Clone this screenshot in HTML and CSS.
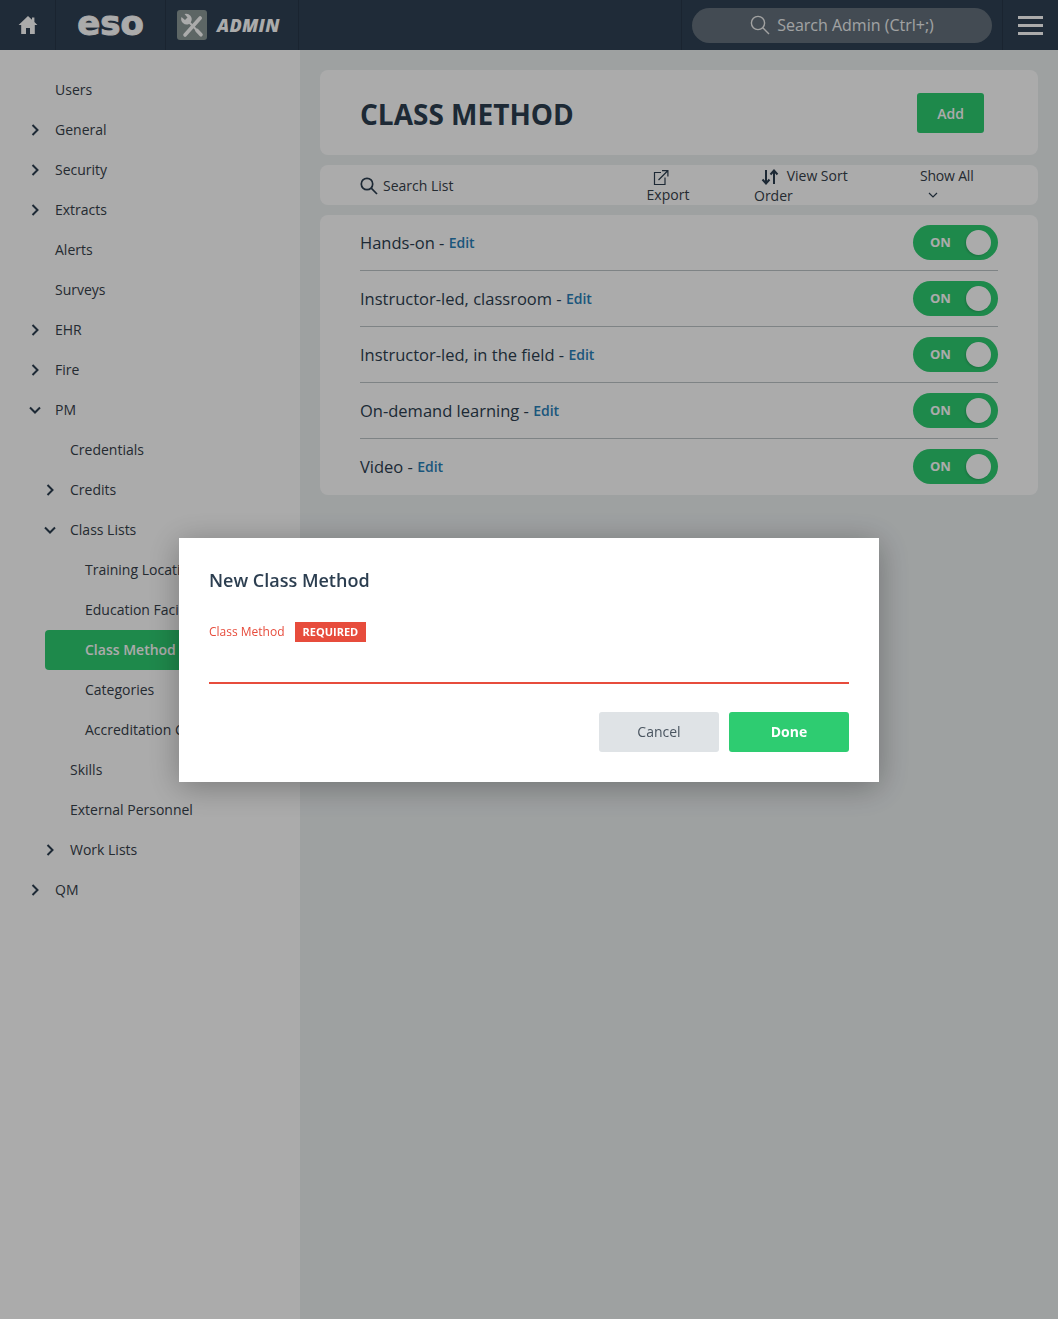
FILE: index.html
```html
<!DOCTYPE html>
<html lang="en">
<head>
<meta charset="utf-8">
<title>Class Method</title>
<link rel="stylesheet" href="styles.css">
</head>
<body>
<header class="topbar">
  <a class="home cell"><svg width="20" height="20" viewBox="0 0 20 20"><path class="fill-light" d="M10 1 L0.6 10 L3.2 10 L3.2 19 L8 19 L8 13 L12 13 L12 19 L16.8 19 L16.8 10 L19.4 10 L16.4 7.1 L16.4 2.5 L14 2.5 L14 4.8 Z"/></svg></a>
  <a class="logo cell">eso</a>
  <div class="app cell">
    <span class="app-icon"><svg width="30" height="30" viewBox="0 0 30 30"><path class="tool-thin" d="M11 11 L20 20.5"/><path class="tool-thin tool-grip" d="M20 20.5 L24 24.8"/><path class="tool-thick" d="M23.2 8 L8 25"/><path class="fill-light" d="M4.5 7 L8 10 L10.5 7.5 L7.5 4 A5.6 5.6 0 0 1 14 12 L12 14 A5.6 5.6 0 0 1 4.5 7 Z"/></svg></span>
    <span class="app-name">ADMIN</span>
  </div>
  <div class="spacer"></div>
  <div class="search cell">
    <div class="pill">
      <svg width="20" height="20" viewBox="0 0 20 20"><circle class="line" cx="8" cy="8" r="6.6"/><path class="line" d="M12.8 12.8 L19 19"/></svg>
      <span>Search Admin (Ctrl+;)</span>
    </div>
  </div>
  <a class="burger"><i></i><i></i><i></i></a>
</header>

<div class="layout">
  <nav class="sidebar">
    <a class="nav l0"><span class="chev"></span>Users</a>
    <a class="nav l0"><span class="chev"><svg width="8" height="12" viewBox="0 0 8 12"><path d="M1.5 1 L6.5 6 L1.5 11"/></svg></span>General</a>
    <a class="nav l0"><span class="chev"><svg width="8" height="12" viewBox="0 0 8 12"><path d="M1.5 1 L6.5 6 L1.5 11"/></svg></span>Security</a>
    <a class="nav l0"><span class="chev"><svg width="8" height="12" viewBox="0 0 8 12"><path d="M1.5 1 L6.5 6 L1.5 11"/></svg></span>Extracts</a>
    <a class="nav l0"><span class="chev"></span>Alerts</a>
    <a class="nav l0"><span class="chev"></span>Surveys</a>
    <a class="nav l0"><span class="chev"><svg width="8" height="12" viewBox="0 0 8 12"><path d="M1.5 1 L6.5 6 L1.5 11"/></svg></span>EHR</a>
    <a class="nav l0"><span class="chev"><svg width="8" height="12" viewBox="0 0 8 12"><path d="M1.5 1 L6.5 6 L1.5 11"/></svg></span>Fire</a>
    <a class="nav l0"><span class="chev"><svg width="12" height="8" viewBox="0 0 12 8"><path d="M1 1.5 L6 6.5 L11 1.5"/></svg></span>PM</a>
    <a class="nav l1"><span class="chev"></span>Credentials</a>
    <a class="nav l1"><span class="chev"><svg width="8" height="12" viewBox="0 0 8 12"><path d="M1.5 1 L6.5 6 L1.5 11"/></svg></span>Credits</a>
    <a class="nav l1"><span class="chev"><svg width="12" height="8" viewBox="0 0 12 8"><path d="M1 1.5 L6 6.5 L11 1.5"/></svg></span>Class Lists</a>
    <a class="nav l2"><span class="chev"></span>Training Locations</a>
    <a class="nav l2"><span class="chev"></span>Education Facilities</a>
    <a class="nav l2 active"><span class="chev"></span>Class Method</a>
    <a class="nav l2"><span class="chev"></span>Categories</a>
    <a class="nav l2"><span class="chev"></span>Accreditation Codes</a>
    <a class="nav l1"><span class="chev"></span>Skills</a>
    <a class="nav l1"><span class="chev"></span>External Personnel</a>
    <a class="nav l1"><span class="chev"><svg width="8" height="12" viewBox="0 0 8 12"><path d="M1.5 1 L6.5 6 L1.5 11"/></svg></span>Work Lists</a>
    <a class="nav l0"><span class="chev"><svg width="8" height="12" viewBox="0 0 8 12"><path d="M1.5 1 L6.5 6 L1.5 11"/></svg></span>QM</a>
  </nav>

  <main class="main">
    <section class="card title-card">
      <h1>CLASS METHOD</h1>
      <button class="add">Add</button>
    </section>

    <section class="card toolbar">
      <div class="tool-search">
        <svg width="18" height="18" viewBox="0 0 18 18"><circle class="dark-line" cx="7" cy="7" r="5.7"/><path class="dark-line" d="M11.2 11.2 L17 17"/></svg>
        <span>Search List</span>
      </div>
      <div class="tool-export">
        <svg width="16" height="15" viewBox="0 0 16 15"><path class="thin-line" d="M8 2.5 H1.5 V14.5 H12 V7.5"/><path class="thin-line" d="M5.5 10 L14.5 1 M9 0.6 H14.9 V6.5"/></svg>
        <span>Export</span>
      </div>
      <div class="tool-sort">
        <svg width="18" height="16" viewBox="0 0 18 16"><path class="sort-line" d="M5 1 V14 M1.5 10.5 L5 14.5 L8.5 10.5 M13 15 V2 M9.5 5.5 L13 1.5 L16.5 5.5"/></svg>
        View Sort Order
      </div>
      <div class="tool-show">
        <span>Show All</span>
        <svg width="10" height="7" viewBox="0 0 10 7"><path class="thin-line" d="M1 1 L5 5 L9 1"/></svg>
      </div>
    </section>

    <section class="card list">
      <div class="row"><span class="row-text">Hands-on - <a class="edit">Edit</a></span><span class="toggle"><b>ON</b><i></i></span></div>
      <div class="row"><span class="row-text">Instructor-led, classroom - <a class="edit">Edit</a></span><span class="toggle"><b>ON</b><i></i></span></div>
      <div class="row"><span class="row-text">Instructor-led, in the field - <a class="edit">Edit</a></span><span class="toggle"><b>ON</b><i></i></span></div>
      <div class="row"><span class="row-text">On-demand learning - <a class="edit">Edit</a></span><span class="toggle"><b>ON</b><i></i></span></div>
      <div class="row"><span class="row-text">Video - <a class="edit">Edit</a></span><span class="toggle"><b>ON</b><i></i></span></div>
    </section>
  </main>
</div>

<div class="overlay">
  <div class="modal">
    <h2>New Class Method</h2>
    <div class="field-label"><span>Class Method</span><em>REQUIRED</em></div>
    <div class="field-input"></div>
    <div class="actions">
      <button class="cancel">Cancel</button>
      <button class="done">Done</button>
    </div>
  </div>
</div>
</body>
</html>
```

FILE: styles.css
```css
* { box-sizing: border-box; }
html, body { height: 100%; margin: 0; overflow: hidden; }
body { font-family: "Open Sans", "Liberation Sans", sans-serif; color: #2c3e50; background: #ecf0f1; display: flex; flex-direction: column; }

.topbar { height: 50px; flex: none; background: #2f4054; display: flex; align-items: stretch; }
.cell { display: flex; align-items: center; border-right: 1px solid #283748; }
.home { width: 56px; justify-content: center; }
.fill-light { fill: #fff; }
.logo { width: 110px; justify-content: center; font-family: "DejaVu Sans", sans-serif; font-weight: 700; font-size: 34px; line-height: 50px; color: #fff; padding-bottom: 4px; -webkit-text-stroke: 1px #fff; }
.app { width: 133px; padding-left: 11px; gap: 10px; }
.app-icon { width: 30px; height: 30px; border-radius: 3px; background: #8b9897; display: block; }
.app-icon svg { display: block; }
.tool-thin { stroke: #fff; fill: none; stroke-width: 2; }
.tool-grip { stroke-width: 3.6; stroke-linecap: round; }
.tool-thick { stroke: #fff; fill: none; stroke-width: 3.6; stroke-linecap: round; }
.app-name { font-weight: 800; font-style: italic; font-size: 18px; color: #fff; letter-spacing: 0.25px; }
.spacer { flex: none; width: 383px; border-right: 1px solid #283748; }
.search { width: 321px; padding-left: 10px; }
.pill { width: 300px; height: 35px; border-radius: 18px; background: #64717c; color: #f0f2f3; font-size: 16px; display: flex; align-items: center; justify-content: center; gap: 7px; }
.pill svg { display: block; }
.line { fill: none; stroke: #f2f2f2; stroke-width: 1.4; }
.burger { flex: 1; display: flex; flex-direction: column; justify-content: center; gap: 5px; padding: 0 15px; }
.burger i { display: block; height: 3px; background: #fff; }

.layout { flex: 1; display: flex; min-height: 0; }
.sidebar { width: 300px; flex: none; background: #fff; padding-top: 20px; }
.nav { display: flex; align-items: center; height: 40px; padding-bottom: 2px; font-size: 14px; color: #36404a; }
.l0 { padding-left: 25px; }
.l1 { padding-left: 40px; }
.l2 { padding-left: 55px; }
.chev { width: 30px; flex: none; display: flex; justify-content: center; padding-right: 10px; margin-top: 2px; }
.chev svg { display: block; }
.chev path { fill: none; stroke: #2c3e50; stroke-width: 2; }
.nav.active { margin-left: 45px; padding-left: 10px; background: #2ecc71; color: #fff; font-weight: 600; border-radius: 4px 0 0 4px; margin-right: 15px; }

.main { flex: 1; padding: 20px; display: flex; flex-direction: column; gap: 10px; min-width: 0; }
.card { background: #fff; border-radius: 8px; }
.title-card { height: 85px; padding: 0 54px 0 40px; display: flex; align-items: center; justify-content: space-between; }
h1 { margin: 2px 0 0; font-size: 28px; font-weight: 700; color: #2c3e50; }
.add { width: 67px; height: 40px; border: 0; border-radius: 3px; background: #2ecc71; color: #fff; font: 600 14px "Open Sans", sans-serif; margin-top: 1px; }

.toolbar { height: 40px; padding-left: 40px; display: flex; font-size: 14px; color: #36404a; line-height: 20px; }
.toolbar svg { display: block; }
.tool-search { width: 253px; display: flex; align-items: center; gap: 5px; padding-top: 2px; }
.tool-export { width: 110px; display: flex; flex-direction: column; align-items: center; padding-top: 5px; margin-right: 31px; }
.tool-export svg { margin-right: 14px; }
.tool-export span { line-height: 20px; }
.tool-sort { width: 166px; padding: 1px 50px 0 0; }
.tool-sort svg { display: inline-block; vertical-align: -4px; margin: 0 4px 0 7px; }
.tool-show { width: 60px; display: flex; flex-direction: column; align-items: flex-start; padding-top: 1px; }
.tool-show svg { margin: 6px 0 0 8px; }
.tool-show span { white-space: nowrap; letter-spacing: -0.2px; }
.dark-line { fill: none; stroke: #2c3e50; stroke-width: 1.7; }
.sort-line { fill: none; stroke: #2c3e50; stroke-width: 2; }
.thin-line { fill: none; stroke: #2c3e50; stroke-width: 1.2; }

.list { padding: 0 40px; }
.row { height: 56px; display: flex; align-items: center; justify-content: space-between; border-bottom: 1px solid #bdc3c7; padding-bottom: 1px; }
.row:last-child { border-bottom: 0; padding-bottom: 2px; }
.row-text { font-size: 16.5px; color: #2c3e50; }
.edit { font-size: 14px; font-weight: 600; color: #2980b9; vertical-align: 1px; }
.toggle { width: 85px; height: 35px; border-radius: 18px; background: #2ecc71; display: flex; align-items: center; justify-content: space-between; padding: 0 7px 0 17px; }
.toggle b { color: #fff; font-size: 13px; font-weight: 700; }
.toggle i { width: 25px; height: 25px; border-radius: 50%; background: #fff; display: block; box-shadow: -1px 1px 2px rgba(0,0,0,.15); }

.overlay { position: fixed; inset: 0; background: rgba(0,0,0,.33); display: flex; align-items: center; justify-content: center; }
.modal { width: 700px; height: 244px; background: #fff; padding: 30px; box-shadow: 0 5px 30px rgba(0,0,0,.3); }
h2 { margin: 0; font-size: 18px; font-weight: 600; color: #2c3e50; line-height: 25px; }
.field-label { display: flex; align-items: center; gap: 10px; margin-top: 29px; height: 20px; font-size: 12px; color: #e74c3c; }
.field-label em { font-style: normal; font-weight: 700; font-size: 11px; color: #fff; background: #e74c3c; height: 20px; line-height: 20px; padding: 0 8px; }
.field-input { height: 42px; border-bottom: 2px solid #e74c3c; }
.actions { display: flex; justify-content: flex-end; gap: 10px; margin-top: 28px; }
.actions button { width: 120px; height: 40px; border: 0; border-radius: 3px; font: 14px "Open Sans", sans-serif; }
.cancel { background: #dfe3e6; color: #4a5560; }
.actions .done { background: #2ecc71; color: #fff; font-weight: 700; }
```
